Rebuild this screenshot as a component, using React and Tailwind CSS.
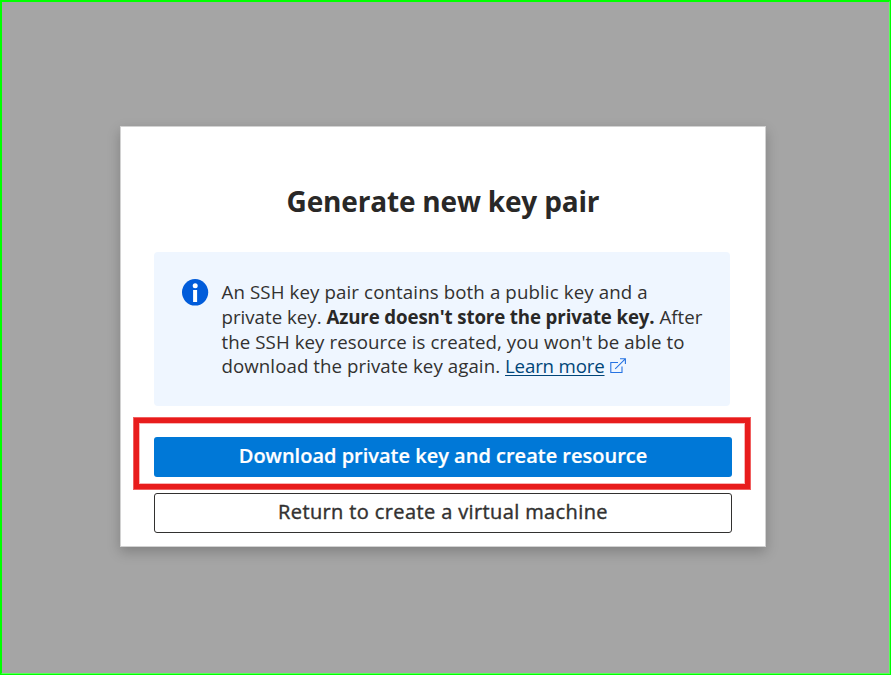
function InfoIcon() {
  return (
    <svg className="mt-[27px] h-[27px] w-[27px] shrink-0" viewBox="0 0 27 27">
      <ellipse cx="13.1" cy="13.3" rx="13.1" ry="13.3" fill="#015cda" />
      <circle cx="13.2" cy="6.8" r="2.5" fill="#fff" />
      <rect x="11.1" y="11" width="4" height="12" fill="#fff" />
    </svg>
  );
}

function ExternalIcon() {
  return (
    <svg className="ml-[5px] inline-block h-[16px] w-[17px] align-[-1px]" viewBox="0 0 17 16" fill="none" stroke="#2673e2" strokeWidth="1.1">
      <path d="M8 4.5H0.8V14.5H12V8.5" />
      <path d="M5.2 10.8L15.3 0.8M10 0.8H15.4V6" />
    </svg>
  );
}

export default function App() {
  return (
    <div className="relative flex h-[675px] w-[891px] items-start border-2 border-[#00ff00] border-r-[#58ff58] border-b-[#58ff58] bg-[#a5a5a5] pt-[124px] pl-[118px] font-['Open_Sans','Noto_Sans',sans-serif] text-[#323130]">
      <main className="relative flex h-[421px] w-[646px] flex-col border border-[#d2d2d2] bg-white px-[33px] shadow-[0_5px_12px_rgba(0,0,0,0.22)]">
        <h1 className="mt-[53px] text-center text-[28px] leading-[42px] font-bold tracking-[-0.18px] whitespace-nowrap text-[#292827]">
          <span>Generate new key pair</span>
        </h1>
        <section className="mt-[30px] flex h-[154px] w-[576px] rounded-[4px] bg-[#eff6ff] pl-[28px]">
          <InfoIcon />
          <p className="mt-[28.3px] ml-[12.5px] text-[18.7px] leading-[24.7px] whitespace-nowrap">
            <span className="block tracking-[0.11px]"><span>An SSH key pair contains both a public key and a</span></span>
            <span className="block">
              <span>private key. </span>
              <b className="font-bold tracking-[-0.13px] text-[#292827]">Azure doesn't store the private key.</b>
              <span> After</span>
            </span>
            <span className="block tracking-[0.07px]"><span>the SSH key resource is created, you won't be able to</span></span>
            <span className="block">
              <span className="tracking-[0.06px]">download the private key again. </span>
              <a className="tracking-[-0.18px] text-[#004578] underline decoration-1 underline-offset-[2px]">Learn more</a>
              <ExternalIcon />
            </span>
          </p>
        </section>
        <button className="mt-[31px] h-[40px] w-[578px] shrink-0 rounded-[3px] bg-[#0078d7] pb-[3px] text-[20px] leading-[30px] font-semibold whitespace-nowrap text-white [-webkit-text-stroke:0.2px_#fff]">
          <span>Download private key and create resource</span>
        </button>
        <button className="mt-[16px] h-[40px] w-[578px] shrink-0 rounded-[3px] border border-[#323130] bg-white pb-[3px] text-[20px] leading-[30px] font-medium tracking-[0.38px] whitespace-nowrap [-webkit-text-stroke:0.4px_#323130]">
          <span>Return to create a virtual machine</span>
        </button>
        <div className="absolute top-[291px] left-[13px] h-[71px] w-[616px] border-[5px] border-[#e81c1c] shadow-[0_0_0_1px_#f06060,inset_0_0_0_1px_#f9b5b5]" />
      </main>
      <div className="absolute -inset-[2px] border-r border-b border-[#00ff00]" />
    </div>
  );
}
